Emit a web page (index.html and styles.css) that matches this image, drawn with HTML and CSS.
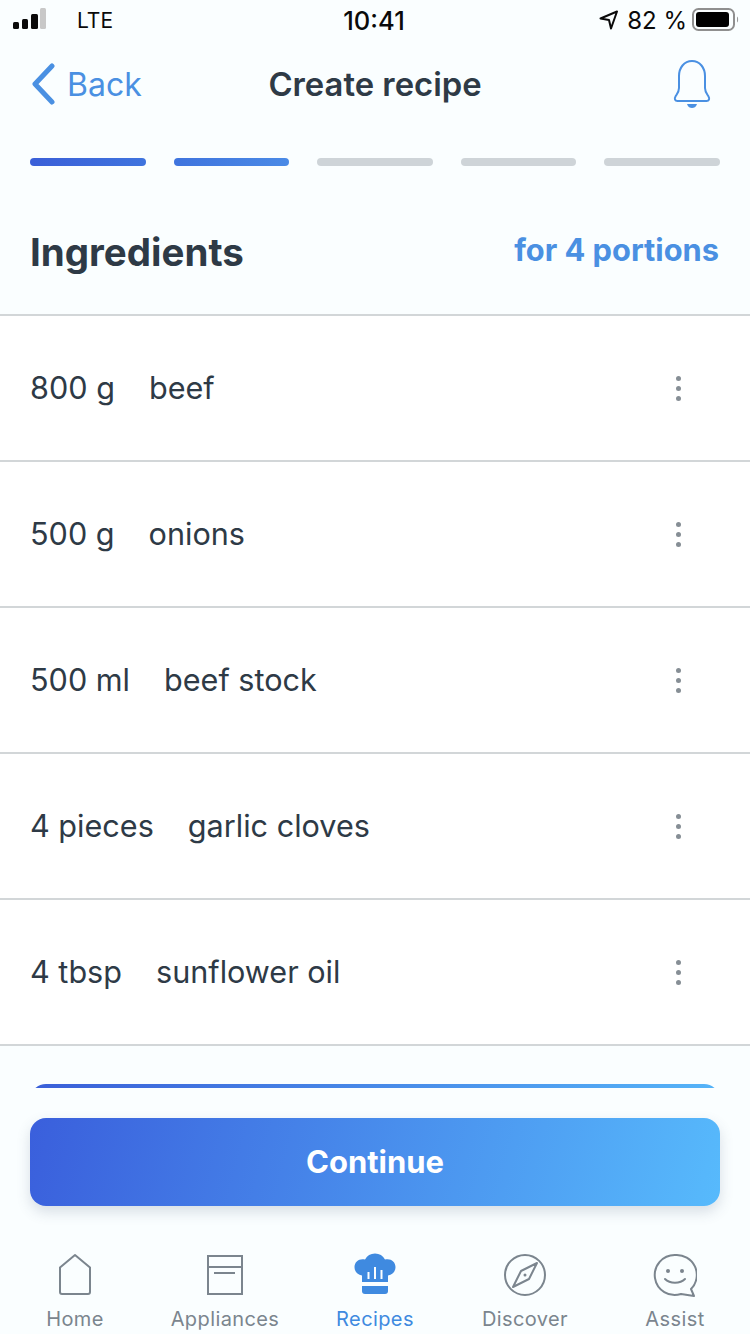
FILE: index.html
```html
<!DOCTYPE html>
<html lang="en">
<head>
<meta charset="utf-8">
<title>Create recipe</title>
<link rel="stylesheet" href="styles.css">
</head>
<body>
<div class="page">
  <div class="status">
    <div class="status-left">
      <svg class="signal" width="34" height="24" viewBox="0 0 34 24"><rect x="0" y="15" width="6" height="7" rx="1.5" fill="#0a0a0a"/><rect x="9" y="12" width="6" height="10" rx="1.5" fill="#0a0a0a"/><rect x="18" y="7" width="7" height="15" rx="1.5" fill="#0a0a0a"/><rect x="27" y="1" width="6" height="21" rx="1.5" fill="#c8c8c8"/></svg>
      <span class="lte">LTE</span>
    </div>
    <div class="time">10:41</div>
    <div class="status-right">
      <svg class="loc" width="20" height="20" viewBox="0 0 20 20"><path d="M1.5 8.500 18 1.500 12 18.500 10 10Z" fill="none" stroke="#0a0a0a" stroke-width="2" stroke-linejoin="round"/></svg>
      <span class="pct">82 %</span>
      <svg class="batt" width="48" height="24" viewBox="0 0 48 24"><rect x="1" y="1" width="41" height="21" rx="5.500" fill="none" stroke="#8f8f8f" stroke-width="2"/><rect x="4" y="4" width="33" height="15" rx="3" fill="#000"/><path d="M45 8.500c1.500.5 1.500 5.500 0 6z" fill="#9a9a9a"/></svg>
    </div>
  </div>

  <div class="nav">
    <div class="back">
      <svg width="26" height="42" viewBox="0 0 26 42"><path d="M22 3 5 21l17 18" fill="none" stroke="#4a90e2" stroke-width="5" stroke-linecap="round" stroke-linejoin="round"/></svg>
      <span>Back</span>
    </div>
    <div class="title">Create recipe</div>
    <svg class="bell" width="38" height="50" viewBox="0 0 38 50"><path d="M19 2C11 2 6 9 6 17v12c0 4-2 6-3.500 8.500C1 40 2 42 4.500 42h29c2.500 0 3.500-2 2-4.500C34 35 32 33 32 29V17C32 9 27 2 19 2Z" fill="none" stroke="#4a90e2" stroke-width="2"/><path d="M14 45h10c-1 3-3 4-5 4s-4-1-5-4Z" fill="#4a90e2"/></svg>
  </div>

  <div class="steps">
    <div class="step step-1"></div>
    <div class="step step-2"></div>
    <div class="step"></div>
    <div class="step"></div>
    <div class="step"></div>
  </div>

  <div class="section">
    <h1>Ingredients</h1>
    <div class="portions">for 4 portions</div>
  </div>

  <div class="list">
    <div class="row"><span class="qty">800 g</span><span class="name">beef</span><span class="more"><i></i><i></i><i></i></span></div>
    <div class="row"><span class="qty">500 g</span><span class="name">onions</span><span class="more"><i></i><i></i><i></i></span></div>
    <div class="row"><span class="qty">500 ml</span><span class="name">beef stock</span><span class="more"><i></i><i></i><i></i></span></div>
    <div class="row"><span class="qty">4 pieces</span><span class="name">garlic cloves</span><span class="more"><i></i><i></i><i></i></span></div>
    <div class="row"><span class="qty">4 tbsp</span><span class="name">sunflower oil</span><span class="more"><i></i><i></i><i></i></span></div>
  </div>

  <div class="peek"><div class="peek-card"></div></div>
  <div class="cta"><span class="cta-label">Continue</span></div>

  <div class="tabs">
    <div class="tab">
      <svg width="40" height="44" viewBox="0 0 40 44"><path d="M20 2 35 14.500V39a2 2 0 0 1-2 2H7a2 2 0 0 1-2-2V14.500Z" fill="none" stroke="#7b858e" stroke-width="2" stroke-linejoin="round"/></svg>
      <span>Home</span>
    </div>
    <div class="tab">
      <svg width="40" height="44" viewBox="0 0 40 44"><path d="M3 3h34v38H3zM3 14h34M9 20h21" fill="none" stroke="#7b858e" stroke-width="2"/></svg>
      <span>Appliances</span>
    </div>
    <div class="tab active">
      <svg width="44" height="44" viewBox="0 0 44 44"><path d="M9 29V22.500C4 21.500 1.500 18 1.500 14 1.500 8.500 6.500 5 12 6.500 14 2.500 17.500.5 22 .5s8 2 10 6C37.500 5 42.500 8.500 42.500 14c0 4-2.500 7.500-7.500 8.500V29Z" fill="#3f8ae0"/><path d="M9 33h26v5a3 3 0 0 1-3 3H12a3 3 0 0 1-3-3Z" fill="#3f8ae0"/><path d="M15.500 26v-7M22 26V14M28.500 26v-9" stroke="#fbfeff" stroke-width="2"/></svg>
      <span>Recipes</span>
    </div>
    <div class="tab">
      <svg width="44" height="44" viewBox="0 0 44 44"><circle cx="22" cy="22" r="20" fill="none" stroke="#7b858e" stroke-width="2"/><path d="M34 10 26 26 10 34l8-16Z" fill="none" stroke="#7b858e" stroke-width="2" stroke-linejoin="round"/><circle cx="22" cy="22" r="1.500" fill="#7b858e"/></svg>
      <span>Discover</span>
    </div>
    <div class="tab">
      <svg width="44" height="44" viewBox="0 0 44 44"><path d="M22 2a20 20 0 1 0 6 39l13 2-3-7A20 20 0 0 0 22 2Z" fill="none" stroke="#7b858e" stroke-width="2" stroke-linejoin="round"/><circle cx="15" cy="18" r="2" fill="#7b858e"/><circle cx="29" cy="18" r="2" fill="#7b858e"/><path d="M12 26c5 5 15 5 20 0" fill="none" stroke="#7b858e" stroke-width="2" stroke-linecap="round"/></svg>
      <span>Assist</span>
    </div>
  </div>
</div>
</body>
</html>
```

FILE: styles.css
```css
* { box-sizing: border-box; }
html, body { margin: 0; padding: 0; }
body { font-family: Inter, "Liberation Sans", sans-serif; background: #fafeff; }
.page { width: 750px; height: 1334px; overflow: hidden; display: flex; flex-direction: column; background: #fafeff; color: #2e3a46; }

.status { height: 40px; padding: 0 0 0 13px; display: flex; align-items: center; justify-content: space-between; position: relative; color: #0a0a0a; font-size: 24px; }
.status-left { display: flex; align-items: center; gap: 30px; }
.signal { display: block; margin-top: -2px; }
.lte { font-weight: 400; font-size: 21px; }
.time { position: absolute; left: 0; right: 2px; text-align: center; font-weight: 500; font-size: 25.500px; }
.status-right { display: flex; align-items: center; gap: 8px; padding-right: 10px; }
.pct { font-size: 24px; }
.batt { margin-left: -3px; }

.nav { height: 88px; padding: 0 39px 0 30px; display: flex; align-items: center; justify-content: space-between; position: relative; }
.back { display: flex; align-items: center; gap: 11px; color: #4a90e2; font-size: 32px; }
.back svg { display: block; }
.title { position: absolute; left: 0; right: 0; text-align: center; font-size: 32.800px; font-weight: 600; }
.bell { display: block; }

.steps { display: flex; gap: 28px; padding: 30px 30px 0; }
.step { flex: 1; height: 8px; border-radius: 4px; background: #ced4d8; }
.step-1 { background: linear-gradient(90deg, #3a5fd8, #3f74de); }
.step-2 { background: linear-gradient(90deg, #3f74de, #4a8ae6); }

.section { height: 150px; padding: 24px 31px 0 30px; display: flex; align-items: center; justify-content: space-between; border-bottom: 2px solid #d2d6d8; }
h1 { margin: 0; font-size: 38.500px; font-weight: 700; }
.portions { font-size: 30.800px; font-weight: 700; color: #4a90e2; margin-bottom: 6px; }

.list { background: #fff; }
.row { height: 146px; padding: 0 30px 2px; display: flex; align-items: center; font-size: 30.600px; border-bottom: 2px solid #d2d6d8; }
.name { margin-left: 34px; }
.more { margin-left: auto; margin-right: 39px; margin-top: 2px; display: flex; flex-direction: column; gap: 5px; }
.more i { display: block; width: 5px; height: 5px; border-radius: 50%; background: #868e95; }

.peek { height: 4px; margin: 38px 30px 0; overflow: hidden; }
.peek-card { height: 88px; border-radius: 16px; background: linear-gradient(90deg, #3a5fd8, #55b4f8); }
.cta { height: 88px; margin: 30px 30px 0; padding-bottom: 2px; border-radius: 16px; display: flex; align-items: center; justify-content: center; color: #fff; font-size: 31px; font-weight: 700; background: linear-gradient(105deg, #3a5fdc, #57bafc); box-shadow: 0 6px 14px rgba(60, 80, 110, 0.18); }

.tabs { display: grid; grid-template-columns: repeat(5, 150px); padding-top: 47px; }
.tab { display: flex; flex-direction: column; align-items: center; color: #7b858e; font-size: 20px; letter-spacing: 0.4px; }
.tab svg { display: block; margin-bottom: 10px; }
.tab.active { color: #3f8ae0; }
```
